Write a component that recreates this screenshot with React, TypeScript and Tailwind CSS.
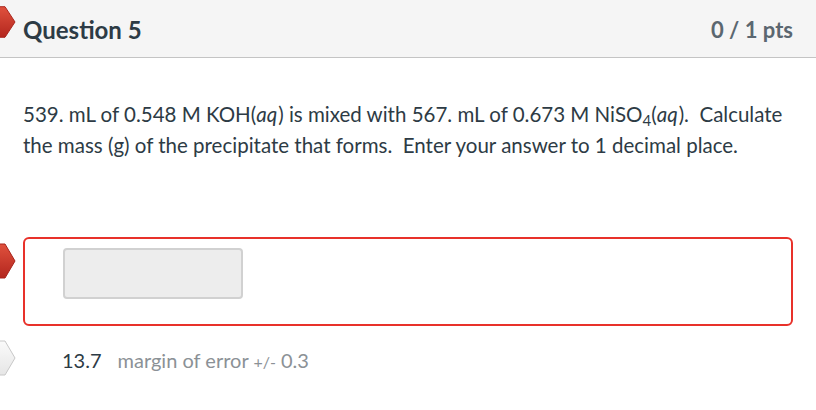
import React from 'react'

function Flag({ variant }: { variant: 'red' | 'white' }) {
    const isRed = variant === 'red'
    return (
        <svg width="22" height="36" viewBox="0 0 22 36" aria-hidden="true">
            <defs>
                <linearGradient id={`flag-${variant}`} x1="0" y1="0" x2="0" y2="1">
                    <stop offset="0" stopColor={isRed ? '#e0513d' : '#fafafa'} />
                    <stop offset="1" stopColor={isRed ? '#b3261e' : '#e6e6e6'} />
                </linearGradient>
            </defs>
            <path
                d="M-6 1 H10 L20 18 L10 35 H-6 Z"
                fill={`url(#flag-${variant})`}
                stroke={isRed ? '#a8221a' : '#c8c8c8'}
                strokeWidth="1"
            />
        </svg>
    )
}

export default function App() {
    return (
        <div className="relative w-[816px] h-[410px] bg-white overflow-hidden font-['Lato','Noto_Sans',sans-serif]">
            {/* Header */}
            <div className="relative h-[58px] bg-[#f5f5f5] border-b border-[#c4c4c4] flex items-center justify-between pl-[23px] pr-[23px]">
                <div className="absolute left-[-5px] top-[4px] scale-y-[0.9]">
                    <Flag variant="red" />
                </div>
                <h2 className="text-[24px] font-bold text-[#2d3b45] pt-[2px]">Question 5</h2>
                <span className="text-[22px] font-bold text-[#5b6770] pt-[2px]">0 / 1 pts</span>
            </div>

            {/* Question text */}
            <div className="px-[23px] pt-[42px] text-[20.5px] leading-[29px] text-[#2d3b45]">
                <p>
                    539. mL of 0.548 M KOH(<i className="pr-[1px]">aq</i>) is mixed with 567. mL of 0.673 M NiSO
                    <span className="relative top-[4px] text-[15px]">4</span>(<i className="pr-[1px]">aq</i>).&nbsp; Calculate the
                    mass (g) of the precipitate that forms.&nbsp; Enter your answer to 1 decimal place.
                </p>
            </div>

            {/* Answer box */}
            <div className="relative mx-[23px] mt-[77px] h-[89px] border-2 border-[#e8312a] rounded-[6px] px-[38px] pt-[9px]">
                <div className="absolute left-[-30px] top-[4px]">
                    <Flag variant="red" />
                </div>
                <div className="w-[180px] h-[51px] bg-[#ededed] border-2 border-[#d1d1d1] rounded-[4px]" />
            </div>

            {/* Correct answer */}
            <div className="relative flex items-baseline gap-[16px] pl-[62px] mt-[20px] text-[20px] leading-[28px]">
                <div className="absolute left-[-5px] top-[-6px]">
                    <Flag variant="white" />
                </div>
                <span className="text-[#2d3b45]">13.7</span>
                <span className="text-[#8b9196]">
                    margin of error <span className="text-[16px]">+/-</span> 0.3
                </span>
            </div>
        </div>
    )
}
